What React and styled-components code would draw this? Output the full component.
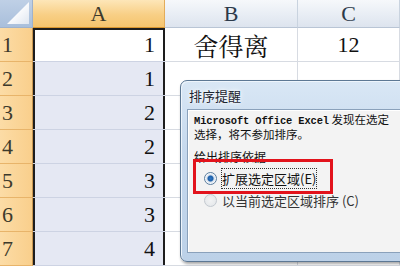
import React from "react"
import styled, { createGlobalStyle } from "styled-components"

const GlobalStyle = createGlobalStyle`
  html, body {
    margin: 0;
    padding: 0;
    width: 400px;
    height: 266px;
    overflow: hidden;
    background: #ffffff;
  }
`

//sheet
const Stage = styled.div`
  position: relative;
  width: 400px;
  height: 266px;
  overflow: hidden;
`

const Sheet = styled.div`
  display: grid;
  grid-template-columns: 33px 132px 133px 1fr;
  grid-template-rows: 28px repeat(7, 34px);
  font-family: "Liberation Serif", "Noto Serif CJK SC", "Noto Sans CJK SC", serif;
`

const Corner = styled.div`
  display: flex;
  align-items: flex-end;
  justify-content: flex-end;
  padding: 0 3px 3px 0;
  background: linear-gradient(#bfd0e6, #a9bfdb);
  border-right: 1px solid #9fb2cc;
  border-bottom: 1px solid #9fb2cc;

  svg {
    display: block;
  }
`

const ColHead = styled.div`
  display: flex;
  align-items: center;
  justify-content: center;
  font-size: 22px;
  color: ${p => (p.$active ? "#3d3a2c" : "#2c3a4a")};
  background: ${p =>
    p.$active
      ? "linear-gradient(#fde6b8, #f8cf85 55%, #f5c46e)"
      : "linear-gradient(#f6f8fb, #e8edf4 55%, #dde4ee)"};
  border-right: 1px solid ${p => (p.$active ? "#e3ac5a" : "#c9d3df")};
  border-bottom: 1px solid ${p => (p.$active ? "#d9962f" : "#b9c5d5")};
`

const RowHead = styled.div`
  display: flex;
  align-items: center;
  padding-left: 2px;
  font-size: 22px;
  color: #3d3a2c;
  background: linear-gradient(90deg, #fcdca6, #f9cf8c);
  border-right: 1px solid #c89650;
  border-bottom: 1px solid #e8b46a;
`

const Cell = styled.div`
  display: flex;
  align-items: center;
  justify-content: ${p => p.$align || "flex-end"};
  padding: 0 ${p => (p.$align === "center" ? "0" : "8px")};
  font-size: ${p => p.$size || "22px"};
  color: #111;
  background: #fff;
  border-right: 1px solid #d7dbe2;
  border-bottom: 1px solid #d7dbe2;
`

const SelCell = styled(Cell)`
  background: ${p => (p.$current ? "#ffffff" : "#e5e8f3")};
  border-right: none;
  border-bottom: 1px solid #cdd3e3;
  box-shadow: inset 2px 0 #1d1d1d, inset -2px 0 #1d1d1d
    ${p => (p.$top ? ", inset 0 2px #1d1d1d" : "")};
  padding-right: 10px;
`

//dialog
const Dialog = styled.div`
  position: absolute;
  left: 180px;
  top: 80px;
  width: 240px;
  height: 182px;
  display: flex;
  flex-direction: column;
  padding: 0 0 8px 6px;
  box-sizing: border-box;
  border: 1px solid #5d7894;
  border-radius: 7px;
  background: linear-gradient(#d9e7f5, #c5d8ed 40%, #bcd1e8);
  box-shadow: inset 1px 1px 0 #eef5fc, 1px 2px 3px rgba(0, 0, 0, 0.35);
  font-family: "Noto Sans CJK SC", "Liberation Sans", sans-serif;
`

const Title = styled.div`
  height: 28px;
  display: flex;
  align-items: center;
  padding-left: 2px;
  font-size: 13px;
  color: #1b2430;
  text-shadow: 0 0 6px #ffffff, 0 0 3px #ffffff;
`

const Body = styled.div`
  flex: 1;
  display: flex;
  flex-direction: column;
  padding: 3px 0 0 6px;
  overflow: hidden;
  background: #f3f3f3;
  border: 1px solid #8aa1bb;
  border-right: none;
  box-shadow: inset 1px 1px 0 #ffffff;
  font-size: 12px;
  color: #111;
`

const Message = styled.div`
  line-height: 13px;
  font-size: 11.5px;
  white-space: nowrap;
`

const Mono = styled.span`
  font-family: "Liberation Mono", monospace;
  font-size: 10.4px;
  font-weight: bold;
  letter-spacing: -0.1px;
`

const Group = styled.div`
  margin-top: 9px;
  line-height: 14px;
`

const Options = styled.div`
  display: flex;
  flex-direction: column;
  margin-top: 3px;
`

const Option = styled.label`
  display: flex;
  align-items: center;
  gap: 5px;
  height: 22px;
  padding-left: 10px;
  font-size: 13px;
  white-space: nowrap;
  color: ${p => (p.$checked ? "#111" : "#333")};
`

const Radio = styled.span`
  width: 11px;
  height: 11px;
  border-radius: 50%;
  border: 1px solid ${p => (p.$checked ? "#5a7d9e" : "#c3c9d0")};
  background: ${p =>
    p.$checked
      ? "radial-gradient(circle, #2f78c8 0, #1d5fa8 2.5px, #cfdcea 3.5px, #f5f7fa 5px)"
      : "radial-gradient(circle, #f2f3f4, #e2e5e8)"};
  flex: none;
`

const Focus = styled.span`
  outline: 1px dotted #333;
  outline-offset: 0;
`

const Highlight = styled.div`
  position: absolute;
  left: 193px;
  top: 159px;
  width: 140px;
  height: 35px;
  box-sizing: border-box;
  border: 3px solid #e2131c;
`

const values = ["1", "1", "2", "2", "3", "3", "4"]

export default function App() {
  return (
    <Stage>
      <GlobalStyle />
      <Sheet>
        <Corner>
          <svg width="22" height="22" viewBox="0 0 22 22">
            <defs>
              <linearGradient id="cm" x1="0" y1="0" x2="1" y2="1">
                <stop offset="0.4" stopColor="#ffffff" />
                <stop offset="1" stopColor="#dfe6f0" />
              </linearGradient>
            </defs>
            <polygon points="22,0 22,22 0,22" fill="url(#cm)" />
          </svg>
        </Corner>
        <ColHead $active>A</ColHead>
        <ColHead>B</ColHead>
        <ColHead>C</ColHead>
        {values.map((v, i) => (
          <React.Fragment key={i}>
            <RowHead>{i + 1}</RowHead>
            <SelCell $current={i === 0} $top={i === 0}>{v}</SelCell>
            <Cell $align="center" $size="25px">{i === 0 ? "舍得离" : ""}</Cell>
            <Cell $align="center">{i === 0 ? "12" : ""}</Cell>
          </React.Fragment>
        ))}
      </Sheet>

      <Dialog>
        <Title>排序提醒</Title>
        <Body>
          <Message>
            <Mono>Microsoft Office Excel</Mono> 发现在选定
          </Message>
          <Message>选择，将不参加排序。</Message>
          <Group>给出排序依据</Group>
          <Options>
            <Option $checked>
              <Radio $checked />
              <Focus>扩展选定区域(E)</Focus>
            </Option>
            <Option>
              <Radio />
              以当前选定区域排序 (C)
            </Option>
          </Options>
        </Body>
      </Dialog>
      <Highlight />
    </Stage>
  )
}
